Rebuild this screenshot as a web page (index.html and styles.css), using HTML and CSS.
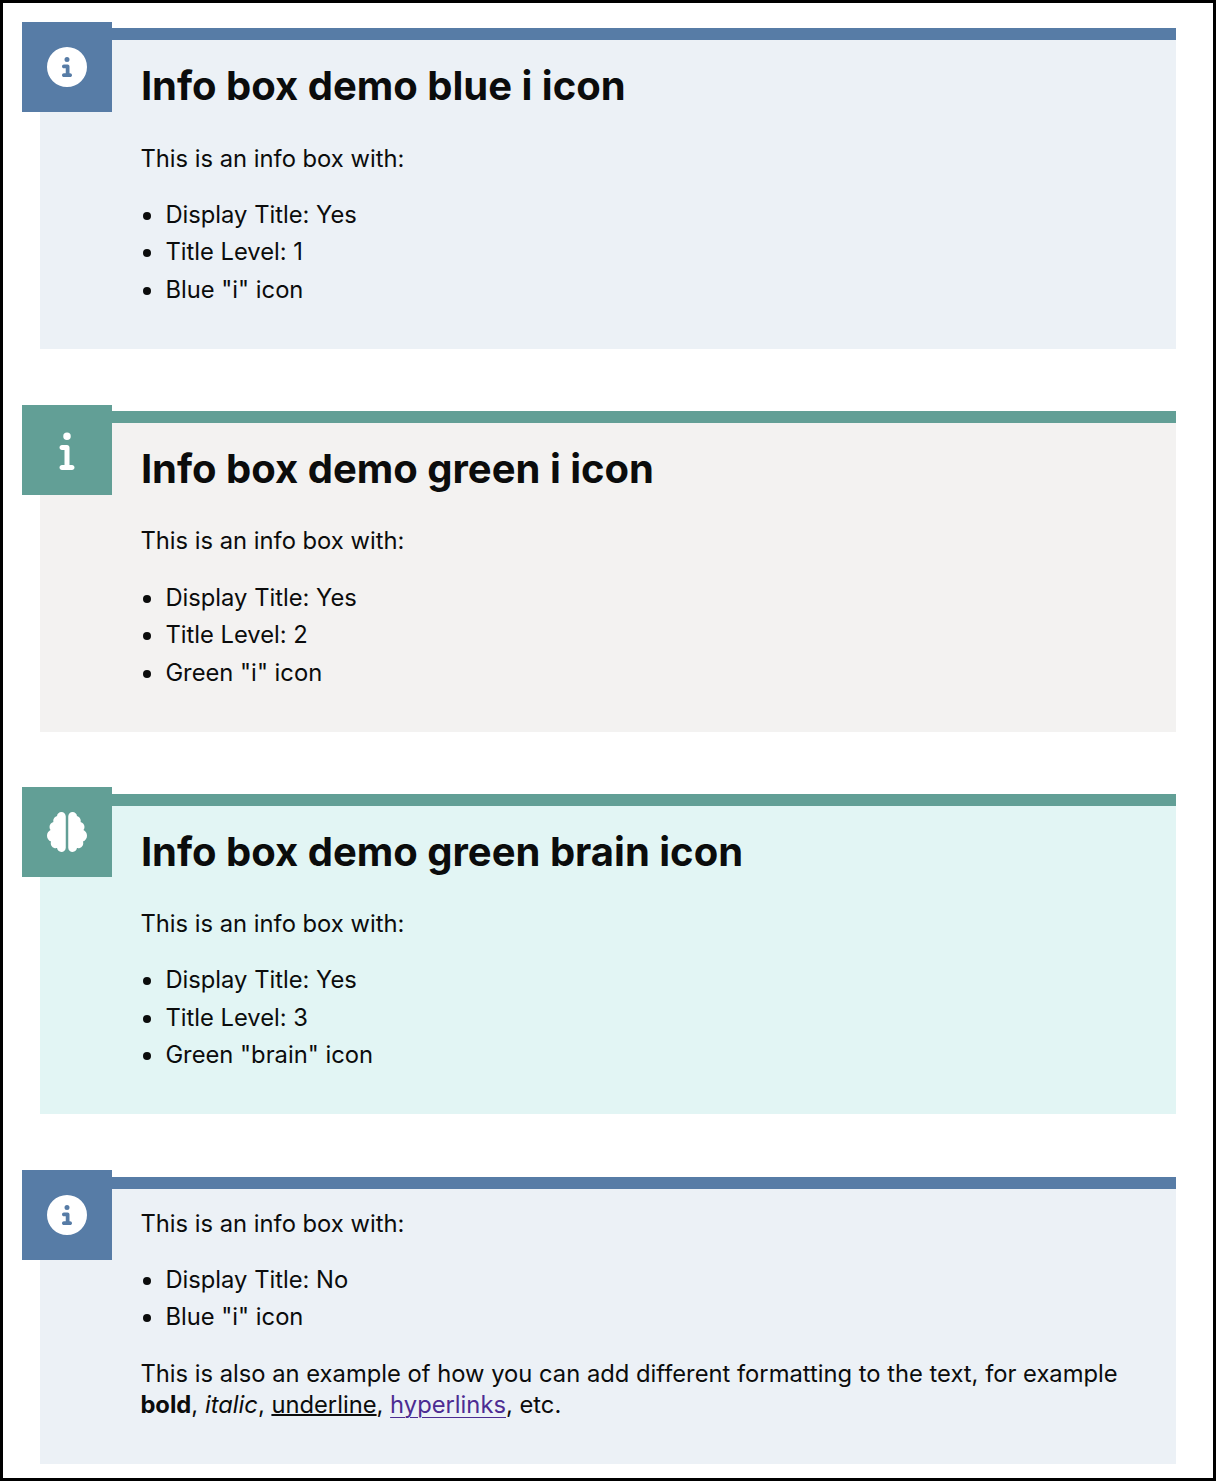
FILE: index.html
```html
<!DOCTYPE html>
<html lang="en">
<head>
<meta charset="utf-8">
<title>Info boxes</title>
<link rel="stylesheet" href="styles.css">
</head>
<body>
<svg class="sprite" aria-hidden="true">
  <symbol id="circle-info" viewBox="0 0 512 512"><path d="M256 512A256 256 0 1 0 256 0a256 256 0 1 0 0 512zM216 336h24V272H216c-13.3 0-24-10.7-24-24s10.7-24 24-24h48c13.3 0 24 10.7 24 24v88h8c13.3 0 24 10.7 24 24s-10.7 24-24 24H216c-13.3 0-24-10.7-24-24s10.7-24 24-24zm40-208a32 32 0 1 1 0 64 32 32 0 1 1 0-64z"/></symbol>
  <symbol id="info" viewBox="0 0 192 512"><path d="M48 80a48 48 0 1 1 96 0A48 48 0 1 1 48 80zM0 224c0-17.7 14.3-32 32-32H96c17.7 0 32 14.3 32 32V448h32c17.7 0 32 14.3 32 32s-14.3 32-32 32H32c-17.7 0-32-14.3-32-32s14.3-32 32-32H64V256H32c-17.7 0-32-14.3-32-32z"/></symbol>
  <symbol id="brain" viewBox="0 0 512 512"><path d="M184 0c30.9 0 56 25.1 56 56V456c0 30.9-25.1 56-56 56c-28.9 0-52.7-21.9-55.7-50.1c-5.2 1.4-10.7 2.1-16.3 2.1c-35.3 0-64-28.7-64-64c0-7.4 1.3-14.6 3.6-21.2C21.4 367.4 0 338.2 0 304c0-31.9 18.7-59.5 45.8-72.3C37.1 220.8 32 207 32 192c0-30.7 21.6-56.3 50.4-62.6C80.8 123.9 80 118 80 112c0-29.9 20.6-55.1 48.3-62.1C131.3 21.9 155.1 0 184 0zM328 0c28.9 0 52.6 21.9 55.7 49.9c27.8 7 48.3 32.1 48.3 62.1c0 6-.8 11.9-2.4 17.4c28.8 6.2 50.4 31.9 50.4 62.6c0 15-5.1 28.8-13.8 39.7C493.3 244.5 512 272.1 512 304c0 34.2-21.4 63.4-51.6 74.8c2.3 6.6 3.6 13.8 3.6 21.2c0 35.3-28.7 64-64 64c-5.6 0-11.1-.7-16.3-2.1c-3 28.2-26.8 50.1-55.7 50.1c-30.9 0-56-25.1-56-56V56c0-30.9 25.1-56 56-56z"/></symbol>
</svg>
<main class="page">
  <section class="box box--blue">
    <div class="box__icon"><svg><use href="#circle-info"/></svg></div>
    <h1 class="box__title">Info box demo blue i icon</h1>
    <p>This is an info box with:</p>
    <ul>
      <li>Display Title: Yes</li>
      <li>Title Level: 1</li>
      <li>Blue "i" icon</li>
    </ul>
  </section>
  <section class="box box--grey">
    <div class="box__icon"><svg><use href="#info"/></svg></div>
    <h2 class="box__title">Info box demo green i icon</h2>
    <p>This is an info box with:</p>
    <ul>
      <li>Display Title: Yes</li>
      <li>Title Level: 2</li>
      <li>Green "i" icon</li>
    </ul>
  </section>
  <section class="box box--green">
    <div class="box__icon"><svg><use href="#brain"/></svg></div>
    <h3 class="box__title">Info box demo green brain icon</h3>
    <p>This is an info box with:</p>
    <ul>
      <li>Display Title: Yes</li>
      <li>Title Level: 3</li>
      <li>Green "brain" icon</li>
    </ul>
  </section>
  <section class="box box--blue">
    <div class="box__icon"><svg><use href="#circle-info"/></svg></div>
    <p>This is an info box with:</p>
    <ul>
      <li>Display Title: No</li>
      <li>Blue "i" icon</li>
    </ul>
    <p>This is also an example of how you can add different formatting to the text, for example <strong>bold</strong>, <em>italic</em>, <u>underline</u>, <a href="#">hyperlinks</a>, etc.</p>
  </section>
</main>
</body>
</html>
```
FILE: styles.css
```css
* {
  box-sizing: border-box;
}

body {
  margin: 0;
  background: #fff;
  color: #0b0c0c;
  font-family: Inter, "Liberation Sans", sans-serif;
  font-size: 23.75px;
  line-height: 31.25px;
}

.sprite {
  display: none;
}

.page {
  display: flex;
  flex-direction: column;
  gap: 62.35px;
  height: 1481px;
  padding: 25.25px 37px 0;
  border: 3px solid #000;
}

.box {
  --accent: #577ca6;
  position: relative;
  padding: 18.75px 50px 18.75px 100.4px;
  border-top: 12px solid var(--accent);
  background: #ecf1f6;
}

.box--grey {
  --accent: #629f96;
  background: #f3f2f1;
}

.box--green {
  --accent: #629f96;
  background: #e2f5f4;
}

.box__icon {
  position: absolute;
  top: -18.5px;
  left: -18px;
  display: flex;
  align-items: center;
  justify-content: center;
  width: 90px;
  height: 90px;
  background: var(--accent);
}

.box__icon svg {
  width: 40px;
  height: 40px;
  fill: #fff;
}

.box__title {
  margin: 0 0 29.1px 0.5px;
  font-size: 40px;
  font-weight: 700;
  line-height: 54.4px;
}

.box p {
  margin: 0 0 25px;
}

.box ul {
  margin: 0 0 25px;
  padding-left: 25px;
}

.box li + li {
  margin-top: 6.25px;
}

.box u {
  text-decoration-thickness: 2px;
}

.box a {
  color: #4c2c92;
  text-decoration-thickness: 1px;
  text-underline-offset: 3.75px;
}
```
